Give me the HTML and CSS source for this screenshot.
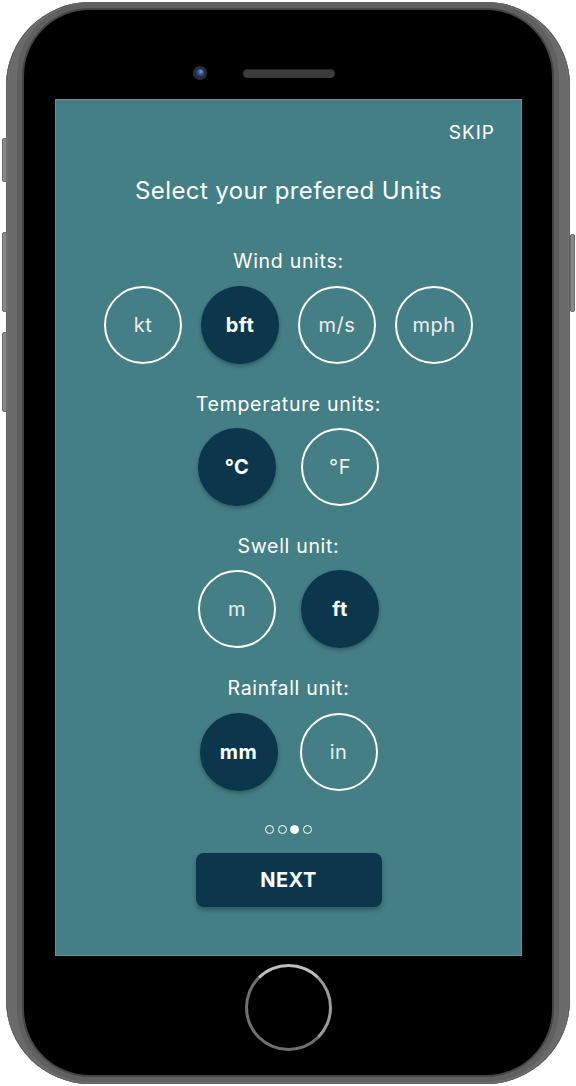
FILE: index.html
```html
<!DOCTYPE html>
<html>
<head>
<meta charset="utf-8">
<link rel="stylesheet" href="styles.css">
</head>
<body>
<div class="phone">
  <div class="side-btn side-l1"></div>
  <div class="side-btn side-l2"></div>
  <div class="side-btn side-l3"></div>
  <div class="side-btn side-r1"></div>
  <div class="bezel">
    <div class="top-row">
      <div class="camera"><div class="lens"></div></div>
      <div class="speaker"></div>
    </div>
    <div class="screen">
      <div class="skip">SKIP</div>
      <div class="title">Select your prefered Units</div>

      <div class="label first">Wind units:</div>
      <div class="row wind">
        <div class="opt">kt</div>
        <div class="opt on">bft</div>
        <div class="opt">m/s</div>
        <div class="opt">mph</div>
      </div>

      <div class="label">Temperature units:</div>
      <div class="row temp">
        <div class="opt on">°C</div>
        <div class="opt">°F</div>
      </div>

      <div class="label">Swell unit:</div>
      <div class="row temp">
        <div class="opt">m</div>
        <div class="opt on">ft</div>
      </div>

      <div class="label">Rainfall unit:</div>
      <div class="row rain">
        <div class="opt on">mm</div>
        <div class="opt">in</div>
      </div>

      <div class="dots">
        <span class="dot"></span>
        <span class="dot"></span>
        <span class="dot on"></span>
        <span class="dot"></span>
      </div>

      <div class="next">NEXT</div>
    </div>
    <div class="home"></div>
  </div>
</div>
</body>
</html>
```

FILE: styles.css
```css
html, body {
  margin: 0;
  padding: 0;
  background: #ffffff;
}
body {
  width: 576px;
  height: 1086px;
  overflow: hidden;
  font-family: Inter, Roboto, "Liberation Sans", sans-serif;
}
.phone {
  position: relative;
  margin: 2px 0 0 6px;
  width: 564px;
  height: 1082px;
  box-sizing: border-box;
  padding: 8px 18px 9px 18px;
  background: #6a6a6a;
  border-radius: 84px;
  box-shadow: inset 0 0 0 1px #5e5e5e, inset 0 0 0 2px #727272;
}
.side-btn {
  position: absolute;
  width: 5px;
  background: #8a8a8a;
  border: 1px solid #6a6a6a;
  box-sizing: border-box;
  border-radius: 2px;
}
.side-l1 { left: -4px; top: 136px; height: 44px; }
.side-l2 { left: -4px; top: 230px; height: 80px; }
.side-l3 { left: -4px; top: 330px; height: 80px; }
.side-r1 { right: -5px; top: 232px; height: 78px; }
.bezel {
  height: 100%;
  background: #000;
  border-radius: 66px;
  display: flex;
  flex-direction: column;
  align-items: flex-start;
  box-shadow: 0 0 0 2px #454545, 0 0 0 7px #606060;
}
.top-row {
  display: flex;
  align-items: center;
  gap: 36px;
  margin: 56px 0 0 169px;
  height: 14px;
}
.camera {
  width: 14px;
  height: 14px;
  border-radius: 50%;
  background: #2a2d33;
  display: flex;
  align-items: center;
  justify-content: center;
}
.lens {
  width: 8px;
  height: 8px;
  border-radius: 50%;
  background: radial-gradient(circle at 60% 35%, #7aa0e0 0, #2b4f9a 40%, #0b1a3a 100%);
}
.speaker {
  width: 92px;
  height: 9px;
  border-radius: 5px;
  background: #3b3b3b;
  box-shadow: inset 0 1px 1px #222;
}
.screen {
  margin: 20px 0 0 32px;
  width: 465px;
  height: 855px;
  background: #447f86;
  box-shadow: 0 0 0 1px #6b8f93;
  display: flex;
  flex-direction: column;
  align-items: center;
  color: #ffffff;
}
.skip {
  align-self: flex-end;
  margin: 21px 26px 0 0;
  font-size: 19px;
  line-height: 24px;
  letter-spacing: 1px;
}
.title {
  margin-top: 31px;
  font-size: 24px;
  line-height: 30px;
  letter-spacing: 0.4px;
}
.label {
  margin-top: 28px;
  font-size: 19.5px;
  line-height: 24px;
  letter-spacing: 0.7px;
}
.label.first {
  margin-top: 43px;
}
.row {
  margin-top: 12px;
  display: flex;
}
.row.wind { gap: 19px; margin-top: 13px; }
.row.temp { gap: 25px; }
.row.rain { gap: 22px; margin-top: 13px; }
.opt {
  width: 78px;
  height: 78px;
  box-sizing: border-box;
  border-radius: 50%;
  border: 2.5px solid #ffffff;
  display: flex;
  align-items: center;
  justify-content: center;
  font-size: 20px;
  font-weight: 400;
  letter-spacing: 0.5px;
  color: #eeeeee;
}
.opt.on {
  border: none;
  background: #0b364b;
  font-weight: bold;
  color: #ffffff;
  box-shadow: 0 2px 4px rgba(0, 0, 0, 0.3);
}
.dots {
  margin-top: 34px;
  display: flex;
  gap: 3.5px;
}
.dot {
  width: 9px;
  height: 9px;
  box-sizing: border-box;
  border-radius: 50%;
  border: 1.5px solid #ffffff;
}
.dot.on {
  background: #ffffff;
}
.next {
  margin-top: 19px;
  width: 186px;
  height: 54px;
  border-radius: 8px;
  background: #0b364b;
  box-shadow: 0 3px 5px rgba(0, 0, 0, 0.3);
  display: flex;
  align-items: center;
  justify-content: center;
  font-size: 20px;
  font-weight: bold;
  letter-spacing: 0.5px;
}
.home {
  margin: 9px 0 0 221px;
  width: 87px;
  height: 87px;
  box-sizing: border-box;
  border-radius: 50%;
  border: 3px solid #6f6f6f;
  border-top-color: #bdbdbd;
  border-right-color: #9a9a9a;
}
```
